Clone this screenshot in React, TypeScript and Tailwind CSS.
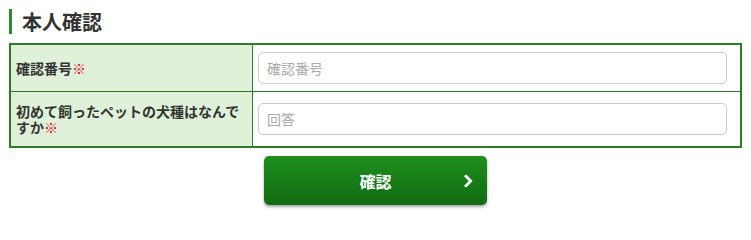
import React from 'react';

const font = { fontFamily: '"Noto Sans CJK JP", "Noto Sans", sans-serif' };

const App: React.FC = () => {
  const rows = [
    { label: '確認番号', placeholder: '確認番号', height: 'h-[46px]' },
    { label: '初めて飼ったペットの犬種はなんですか', placeholder: '回答', height: 'h-[55px]' },
  ];

  return (
    <div className="w-[751px] h-[218px] bg-white pt-[9px] px-[9px] font-['Noto_Sans_CJK_JP',sans-serif]">
      <h2 className="h-[25px] border-l-[3px] border-[#2b8a2b] pl-[10px] text-[20px] font-bold leading-[25px] text-[#333]">
        本人確認
      </h2>

      <div className="mt-[9px] w-[733px] border-2 border-[#2a7d23]">
        {rows.map((row, index) => (
          <div
            key={index}
            className={`flex ${row.height} ${index > 0 ? 'border-t border-[#2a7d23]' : ''}`}
          >
            <div className="w-[242px] shrink-0 border-r border-[#2a7d23] bg-[#dff2d9] pl-[5px] pr-[4px] flex items-center">
              <p className="text-[14px] font-bold leading-[16px] text-[#333]">
                {row.label}
                <span className="text-[#e60012]">※</span>
              </p>
            </div>
            <div className="flex-1 flex items-center pl-[5px] pr-[13px]">
              <input
                type="text"
                placeholder={row.placeholder}
                className="w-full h-[32px] rounded-[5px] border border-[#cccccc] px-[8px] text-[14px] text-[#333] placeholder:text-[#aaa] outline-none"
                style={font}
              />
            </div>
          </div>
        ))}
      </div>

      <div className="flex justify-center mt-[8px]">
        <button className="relative w-[223px] h-[49px] rounded-[5px] bg-gradient-to-b from-[#1e8f1e] to-[#116b11] shadow-[0_2px_3px_rgba(0,0,0,0.35)] text-white text-[16px] font-bold">
          確認
          <svg
            className="absolute right-[13px] top-1/2 -translate-y-1/2"
            width="11"
            height="13"
            viewBox="0 0 11 13"
            fill="none"
          >
            <path d="M3 1.8 L7.7 6.5 L3 11.2" stroke="white" strokeWidth="2.8" strokeLinecap="square" />
          </svg>
        </button>
      </div>
    </div>
  );
};

export default App;
